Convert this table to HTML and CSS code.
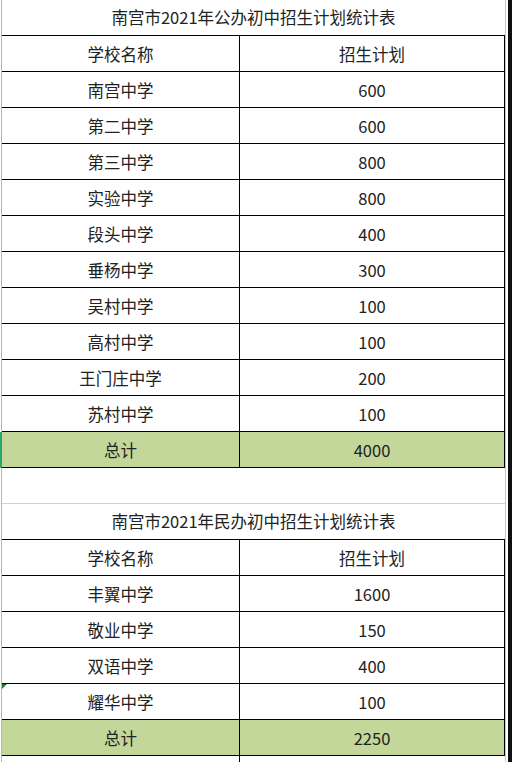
FILE: index.html
```html
<!DOCTYPE html>
<html lang="zh-CN">
<head>
<meta charset="utf-8">
<title>南宫市2021年初中招生计划统计表</title>
<link rel="stylesheet" href="styles.css">
</head>
<body>
<div class="sheet">
  <div class="gutter"></div>
  <div class="main">
    <div class="title">南宫市2021年公办初中招生计划统计表</div>
    <div class="tbl">
      <div class="row"><div class="c1">学校名称</div><div class="c2">招生计划</div></div>
      <div class="row"><div class="c1">南宫中学</div><div class="c2">600</div></div>
      <div class="row"><div class="c1">第二中学</div><div class="c2">600</div></div>
      <div class="row"><div class="c1">第三中学</div><div class="c2">800</div></div>
      <div class="row"><div class="c1">实验中学</div><div class="c2">800</div></div>
      <div class="row"><div class="c1">段头中学</div><div class="c2">400</div></div>
      <div class="row"><div class="c1">垂杨中学</div><div class="c2">300</div></div>
      <div class="row"><div class="c1">吴村中学</div><div class="c2">100</div></div>
      <div class="row"><div class="c1">高村中学</div><div class="c2">100</div></div>
      <div class="row"><div class="c1">王门庄中学</div><div class="c2">200</div></div>
      <div class="row"><div class="c1">苏村中学</div><div class="c2">100</div></div>
      <div class="row total selected"><div class="c1">总计</div><div class="c2">4000</div></div>
    </div>
    <div class="gap"></div>
    <div class="title">南宫市2021年民办初中招生计划统计表</div>
    <div class="tbl">
      <div class="row"><div class="c1">学校名称</div><div class="c2">招生计划</div></div>
      <div class="row"><div class="c1">丰翼中学</div><div class="c2">1600</div></div>
      <div class="row"><div class="c1">敬业中学</div><div class="c2">150</div></div>
      <div class="row"><div class="c1">双语中学</div><div class="c2">400</div></div>
      <div class="row"><div class="c1 flagged">耀华中学</div><div class="c2">100</div></div>
      <div class="row total"><div class="c1">总计</div><div class="c2">2250</div></div>
    </div>
    <div class="tail"><div class="c1"></div></div>
  </div>
  <div class="rgrid"></div>
  <div class="rdark"></div>
</div>
</body>
</html>
```

FILE: styles.css
```css
html, body {
  margin: 0;
  padding: 0;
  background: #ffffff;
}

.sheet {
  width: 512px;
  height: 762px;
  overflow: hidden;
  display: flex;
  background: #ffffff;
  font-family: "Noto Sans CJK SC", "Noto Sans", sans-serif;
  font-size: 16.5px;
  color: #222222;
}

.gutter {
  width: 1px;
  flex: none;
  border-right: 1px solid #b4b4c8;
}

.main {
  width: 503px;
  flex: none;
  display: flex;
  flex-direction: column;
}

.title {
  height: 35px;
  line-height: 35px;
  text-align: center;
  flex: none;
}

.tbl {
  border-top: 1px solid #000;
  flex: none;
}

.row {
  display: flex;
  height: 35px;
  border-bottom: 1px solid #000;
  position: relative;
}

.c1, .c2 {
  height: 35px;
  line-height: 34px;
  padding-top: 1px;
  box-sizing: border-box;
  text-align: center;
  border-right: 1px solid #000;
  position: relative;
}

.c1 {
  width: 238px;
}

.c2 {
  width: 265px;
}

.total .c1,
.total .c2 {
  background: #c4d79b;
}

.selected::before {
  content: "";
  position: absolute;
  left: -2px;
  top: 0;
  width: 2px;
  height: 36px;
  background: #27a96b;
}

.flagged::before {
  content: "";
  position: absolute;
  left: 0;
  top: 0;
  width: 0;
  height: 0;
  border-top: 5px solid #1f7a3a;
  border-right: 5px solid transparent;
}

.gap {
  height: 35px;
  flex: none;
  border-bottom: 1px solid #d0d0d0;
}

.tail {
  flex: 1;
  display: flex;
}

.tail .c1 {
  height: auto;
  padding: 0;
}

.rgrid {
  width: 2px;
  flex: none;
  border-left: 1px solid #c8c8c8;
}

.rdark {
  width: 4px;
  flex: none;
  background: #101010;
}
```
